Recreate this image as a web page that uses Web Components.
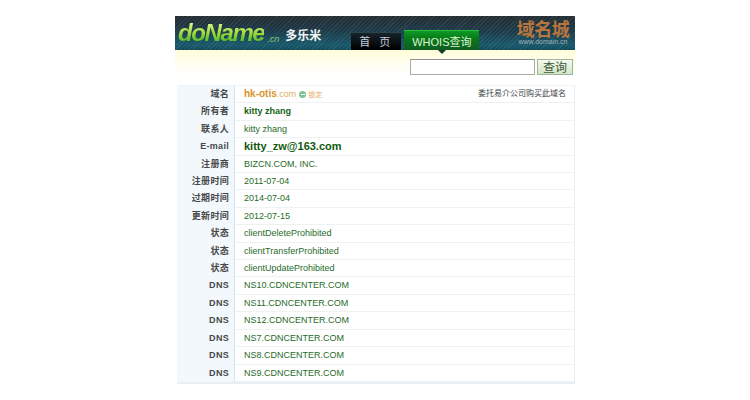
<!DOCTYPE html>
<html><head><meta charset="utf-8">
<style>
html,body{margin:0;padding:0;background:#fff;font-family:"Liberation Sans","Noto Sans CJK SC",sans-serif}
body{height:400px;overflow:hidden}
</style></head><body>
<whois-page>
  <site-header slot="header"></site-header>
  <search-bar slot="search"></search-bar>
  <whois-table slot="table">
    <whois-row label="域名" kind="domain"></whois-row>
    <whois-row label="所有者" kind="bold">kitty zhang</whois-row>
    <whois-row label="联系人" >kitty zhang</whois-row>
    <whois-row label="E-mail" kind="big">kitty_zw@163.com</whois-row>
    <whois-row label="注册商">BIZCN.COM, INC.</whois-row>
    <whois-row label="注册时间">2011-07-04</whois-row>
    <whois-row label="过期时间">2014-07-04</whois-row>
    <whois-row label="更新时间">2012-07-15</whois-row>
    <whois-row label="状态">clientDeleteProhibited</whois-row>
    <whois-row label="状态">clientTransferProhibited</whois-row>
    <whois-row label="状态">clientUpdateProhibited</whois-row>
    <whois-row label="DNS">NS10.CDNCENTER.COM</whois-row>
    <whois-row label="DNS">NS11.CDNCENTER.COM</whois-row>
    <whois-row label="DNS">NS12.CDNCENTER.COM</whois-row>
    <whois-row label="DNS">NS7.CDNCENTER.COM</whois-row>
    <whois-row label="DNS">NS8.CDNCENTER.COM</whois-row>
    <whois-row label="DNS">NS9.CDNCENTER.COM</whois-row>
  </whois-table>
</whois-page>
<script>
function def(name, html, init){
  customElements.define(name, class extends HTMLElement{
    connectedCallback(){
      if(this.shadowRoot) return;
      const r=this.attachShadow({mode:'open'});
      r.innerHTML=html;
      if(init) init.call(this,r);
    }
  });
}
def('whois-page',`<style>
:host{display:flex;flex-direction:column;width:400px;margin:16px 0 0 175px}
</style><slot name="header"></slot><slot name="search"></slot><slot name="table"></slot>`);

def('site-header',`<style>
:host{display:block;height:34px;position:relative;overflow:visible;
 background:repeating-linear-gradient(135deg,rgba(255,255,255,.07) 0 1px,rgba(255,255,255,0) 1px 3px),linear-gradient(#232d33 0,#1c3a48 45%,#17586b 85%,#124a5b 100%);
 display:flex;align-items:stretch}
.logo{font:italic bold 24px/1 "Liberation Sans",sans-serif;letter-spacing:-1.4px;margin:5px 0 0 3px;height:24px;
 background:linear-gradient(#d8f28a 10%,#9edb3a 50%,#4fb52a 90%);-webkit-background-clip:text;background-clip:text;color:transparent}
.cn{font:italic 9px/1 "Liberation Sans",sans-serif;color:#8fc46a;margin:19px 0 0 3px}
.brand{font:bold 12px/1 "Noto Sans CJK SC",sans-serif;color:#f1f5f5;margin:13px 0 0 6px}
.tab{box-sizing:border-box;font:11px/1 "Liberation Sans","Noto Sans CJK SC",sans-serif;text-align:center;align-self:flex-end;height:18px;padding-top:4px}
.home{margin-left:30px;width:50px;background:linear-gradient(#16242a,#000 95%);color:#ccd;letter-spacing:3px;border-top:1px solid #2c4650}
.whois{margin-left:3px;width:75px;height:20px;padding-top:6px;color:#dff3cf;background:linear-gradient(#0d9a24,#087a1a 40%,#0f5e22);border-top:1px solid #2cc03c;position:relative}
.whois::after{content:"";position:absolute;left:50%;margin-left:-4px;bottom:-4px;border:4px solid transparent;border-bottom:0;border-top-color:#123c2a}
.dn{position:absolute;right:4px;top:2px;width:56px;text-align:center}
.dn b{display:block;font:bold 18px/20px "Noto Sans CJK SC",sans-serif;color:#b8763f;letter-spacing:-.5px}
.dn i{display:block;font:normal 7px/8px "Liberation Sans",sans-serif;color:#9fb2b8}
</style>
<div class="logo">doName</div><div class="cn">.cn</div><div class="brand">多乐米</div>
<div class="tab home">首 页</div><div class="tab whois">WHOIS查询</div>
<div class="dn"><b>域名城</b><i>www.domain.cn</i></div>`);

def('search-bar',`<style>
:host{display:flex;justify-content:flex-end;align-items:flex-start;gap:2px;height:35px;padding:9px 2px 0 0;box-sizing:border-box;
 background:linear-gradient(#fffdd8,#fffef0 40%,#fff 75%)}
.in{box-sizing:border-box;width:125px;height:16px;background:#fff;border:1px solid #a9aca4;border-top-color:#8f938c}
.btn{box-sizing:border-box;width:36px;height:16px;border:1px solid #9fb59a;background:linear-gradient(#f6faf0,#d3e4c6);
 font:12px/14px "Noto Sans CJK SC",sans-serif;color:#3c5a3c;text-align:center}
</style><div class="in"></div><div class="btn">查询</div>`);

def('whois-table',`<style>
:host{display:block;width:397px;margin-left:2px;border-right:1px solid #e6eff5;border-bottom:2px solid #e8f0f6;border-top:1px solid #f0f5f8;box-sizing:content-box}
</style><slot></slot>`);

def('whois-row',`<style>
:host{display:grid;grid-template-columns:58px 1fr;height:17.42px;box-sizing:border-box;border-bottom:1px solid #eef3f2;font-family:"Liberation Sans","Noto Sans CJK SC",sans-serif}
.l{background:#f3f8fc;border-right:1px solid #d6e6f0;margin-bottom:-1px;text-align:right;padding-right:5px;font-size:9px;font-weight:bold;line-height:16.4px;color:#45484a;letter-spacing:.3px}
.v{padding-left:9px;font-size:9px;line-height:16.4px;color:#1f6b1f;white-space:nowrap;display:flex;justify-content:space-between;padding-right:8px}
:host([kind=bold]) .v{font-weight:bold;color:#155f15}
:host([kind=big]) .v{font-weight:bold;font-size:11px;color:#0f5a0f}
.dm b{color:#d8932a;font-size:10px}
.dm span{color:#e2ad62}
.dot{display:inline-block;width:7px;height:7px;border-radius:50%;background:#7cc58e;margin-left:3px;vertical-align:-1px;position:relative}
.dot::after{content:"";position:absolute;left:1.5px;right:1.5px;top:3px;height:1px;background:#fff}
.ghost{color:#d6e6da;font-size:7px;margin-left:2px}
.note{color:#3c4648;font-size:8px}
</style><div class="l"></div><div class="v"></div>`,function(r){
  r.querySelector('.l').textContent=this.getAttribute('label');
  const v=r.querySelector('.v');
  if(this.getAttribute('kind')==='domain'){
    v.innerHTML='<div class="dm"><b>hk-otis</b><span>.com</span><i class="dot"></i><span class="ghost">锁定</span></div><div class="note">委托易介公司购买此域名</div>';
  } else {
    v.innerHTML='<slot></slot>';
  }
});
</script>
</body></html>
